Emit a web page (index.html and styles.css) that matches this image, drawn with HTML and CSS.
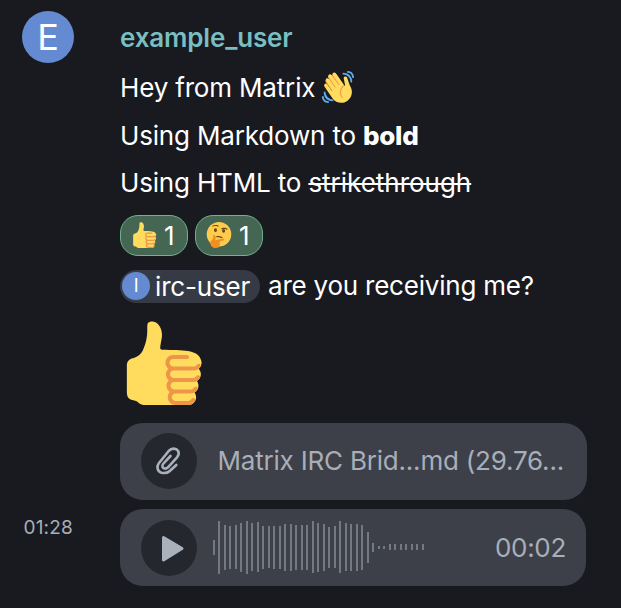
FILE: index.html
```html
<!DOCTYPE html>
<html lang="en">
<head>
<meta charset="utf-8">
<title>Chat</title>
<link rel="stylesheet" href="styles.css">
</head>
<body>
<svg class="defs" aria-hidden="true">
  <symbol id="thumb" viewBox="0 0 36 36">
    <path fill="#FFDB5E" d="M34.956 17.916c0-.503-.12-.975-.321-1.404-1.341-4.326-7.619-4.01-16.549-4.221-1.493-.035-.639-1.798-.115-5.668.341-2.517-1.282-6.382-4.01-6.382-4.498 0-.171 3.548-4.148 12.322-2.125 4.688-6.875 2.062-6.875 6.771v10.719c0 1.833.18 3.595 2.758 3.885C8.195 34.219 7.633 36 11.238 36h18.044c1.838 0 3.333-1.496 3.333-3.334 0-.762-.267-1.456-.698-2.018 1.02-.571 1.72-1.649 1.72-2.899 0-.76-.266-1.454-.696-2.015 1.023-.57 1.725-1.649 1.725-2.901 0-.909-.368-1.733-.961-2.336.757-.611 1.251-1.535 1.251-2.581z"/>
    <path fill="#EE9547" d="M23.02 21.249h8.604c1.17 0 2.268-.626 2.866-1.633.246-.415.109-.952-.307-1.199-.415-.247-.952-.108-1.199.307-.283.479-.806.775-1.361.775h-8.81c-.873 0-1.583-.71-1.583-1.583s.71-1.583 1.583-1.583H28.7c.483 0 .875-.392.875-.875s-.392-.875-.875-.875h-5.888c-1.838 0-3.333 1.495-3.333 3.333 0 1.025.475 1.932 1.205 2.544-.615.605-.998 1.445-.998 2.373 0 1.028.478 1.938 1.212 2.549-.611.604-.99 1.441-.99 2.367 0 1.12.559 2.108 1.409 2.713-.524.589-.852 1.356-.852 2.204 0 1.838 1.495 3.333 3.333 3.333h5.484c1.17 0 2.269-.625 2.867-1.632.247-.415.11-.952-.305-1.199-.416-.245-.953-.11-1.199.305-.285.479-.808.776-1.363.776h-5.484c-.873 0-1.583-.71-1.583-1.583s.71-1.583 1.583-1.583h6.506c1.17 0 2.27-.626 2.867-1.633.247-.416.11-.953-.305-1.199-.419-.251-.954-.11-1.199.305-.289.487-.799.777-1.363.777h-7.063c-.873 0-1.583-.711-1.583-1.584s.71-1.583 1.583-1.583h8.091c1.17 0 2.269-.625 2.867-1.632.247-.415.11-.952-.305-1.199-.417-.246-.953-.11-1.199.305-.289.486-.799.776-1.363.776H23.02c-.873 0-1.583-.71-1.583-1.583s.71-1.584 1.583-1.584z"/>
  </symbol>
</svg>
<main class="timeline">
  <div class="side"><div class="avatar">E</div></div>
  <div class="body">
    <div class="sender">example_user</div>
    <p class="line">Hey from Matrix <svg class="wave-emoji" viewBox="0 0 36 36"><path fill="#EF9645" d="M4.861 9.147c.94-.657 2.357-.531 3.201.166l-.968-1.407c-.779-1.111-.5-2.313.612-3.093 1.112-.777 4.263 1.312 4.263 1.312-.786-1.122-.639-2.544.483-3.331 1.122-.784 2.67-.513 3.456.611l10.292 14.72L25 31l-11.083-4.042L4.25 12.625c-.786-1.122-.519-2.692.611-3.478z"/><path fill="#FFDC5D" d="M2.695 17.336s-1.132-1.65.519-2.781c1.649-1.131 2.78.518 2.78.518l5.251 7.658c.181-.302.379-.6.6-.894L4.557 11.21s-1.131-1.649.519-2.78c1.649-1.131 2.78.518 2.78.518l6.855 9.997c.255-.208.516-.417.785-.622L7.549 6.732s-1.131-1.649.519-2.78c1.649-1.131 2.78.518 2.78.518l7.947 11.589c.292-.179.581-.334.871-.498L12.238 4.729s-1.131-1.649.518-2.78c1.649-1.131 2.78.518 2.78.518l7.854 11.454 1.194 1.742c-4.948 3.394-5.419 9.779-2.592 13.902.565.825 1.39.26 1.39.26-3.393-4.949-2.357-10.51 2.592-13.903L24.515 8.62s-.545-1.924 1.378-2.47c1.924-.545 2.47 1.379 2.47 1.379l1.685 5.004c.668 1.984 1.379 3.961 2.32 5.831 2.657 5.28 1.07 11.842-3.94 15.279-5.465 3.747-12.936 2.354-16.684-3.11L2.695 17.336z"/><g fill="#5DADEC"><path d="M12 32.042C8 32.042 3.958 28 3.958 24c0-.553-.405-1-.958-1s-1.042.447-1.042 1C1.958 30 6 34.042 12 34.042c.553 0 1-.489 1-1.042s-.447-.958-1-.958z"/><path d="M7 34c-3 0-5-2-5-5 0-.553-.447-1-1-1s-1 .447-1 1c0 4 3 7 7 7 .553 0 1-.447 1-1s-.447-1-1-1zM24 2c-.552 0-1 .448-1 1s.448 1 1 1c4 0 8 3.589 8 8 0 .552.448 1 1 1s1-.448 1-1c0-5.514-4-10-10-10z"/><path d="M29 .042c-.552 0-1 .406-1 .958s.448 1.042 1 1.042c3 0 4.958 2.225 4.958 4.958 0 .552.489 1 1.042 1s.958-.448.958-1C35.958 3.163 33 .042 29 .042z"/></g></svg></p>
    <p class="line markdown">Using Markdown to <strong>bold</strong></p>
    <p class="line">Using HTML to <del>strikethrough</del></p>
    <div class="reactions">
      <div class="reaction"><svg class="emoji"><use href="#thumb"/></svg><span>1</span></div>
      <div class="reaction"><svg class="emoji" viewBox="0 0 36 36"><circle fill="#FFCB4C" cx="18" cy="17.018" r="17"/><path fill="#65471B" d="M14.524 21.036c-.145-.116-.258-.274-.312-.464-.134-.46.13-.918.59-1.021 4.528-1.021 7.577 1.363 7.706 1.465.384.306.459.845.173 1.205-.286.358-.828.401-1.211.097-.11-.084-2.523-1.923-6.182-1.098-.274.061-.554-.016-.764-.184z"/><ellipse fill="#65471B" cx="13.119" cy="11.174" rx="2.125" ry="2.656"/><ellipse fill="#65471B" cx="24.375" cy="12.236" rx="2.125" ry="2.656"/><path fill="#F19020" d="M17.276 35.149s1.265-.411 1.429-1.352c.173-.972-.624-1.167-.624-1.167s1.041-.208 1.172-1.376c.123-1.101-.861-1.363-.861-1.363s.97-.4 1.016-1.539c.038-.959-.995-1.428-.995-1.428s5.038-1.221 5.556-1.341c.516-.12 1.32-.615 1.069-1.694-.249-1.08-1.204-1.118-1.697-1.003-.494.115-6.744 1.566-8.9 2.068l-1.439.334c-.54.127-.785-.11-.404-.512.508-.536.833-1.129.946-2.113.119-1.035-.232-2.313-.433-2.809-.374-.921-1.005-1.649-1.734-1.899-1.137-.39-1.945.321-1.542 1.561.604 1.854.208 3.375-.833 4.293-2.449 2.157-3.588 3.695-2.83 6.973.828 3.575 4.377 5.876 7.952 5.048l3.152-.681z"/><path fill="#65471B" d="M9.296 6.351c-.164-.088-.303-.224-.391-.399-.216-.428-.04-.927.393-1.112 4.266-1.831 7.699-.043 7.843.034.433.231.608.747.391 1.154-.216.405-.74.546-1.173.318-.123-.063-2.832-1.432-6.278.047-.257.109-.547.085-.785-.042zm12.135 3.75c-.156-.098-.286-.243-.362-.424-.187-.442.023-.927.468-1.084 4.381-1.536 7.685.48 7.823.567.415.26.555.787.312 1.178-.242.39-.776.495-1.191.238-.12-.072-2.727-1.621-6.267-.379-.266.091-.553.046-.783-.096z"/></svg><span>1</span></div>
    </div>
    <div class="mention-line"><span class="mention"><span class="mini-avatar">I</span>irc-user</span><span class="question">are you receiving me?</span></div>
    <svg class="big-emoji"><use href="#thumb"/></svg>
    <div class="card file">
      <div class="round"><svg class="clip" viewBox="0 0 36 40"><path d="M26.300 25 19.500 31.200C17.500 33 14.500 33.300 11.500 32.800C7.500 31.500 6.200 26.800 8.800 23.300L18.500 11.200C21.500 7.800 26 7.700 28.200 11C29.300 13.200 28.600 15.300 27 17.300L18 27.300C16 29.200 13 28.900 12.500 26.900C12 25.500 12.600 24.500 13.500 23.500L20.500 16" fill="none" stroke="#a9b2bc" stroke-width="2.600" stroke-linecap="round" stroke-linejoin="round"/></svg></div>
      <span class="filename">Matrix IRC Brid...md (29.76...</span>
    </div>
  </div>
  <div class="side time">01:28</div>
  <div class="card audio">
    <div class="round"><svg class="play" viewBox="0 0 56 56"><path d="M22.500 17.500 41 28.500 22.500 40Z" fill="#a9b2bc" stroke="#a9b2bc" stroke-width="3" stroke-linejoin="round"/></svg></div>
    <svg class="waveform" viewBox="0 0 213 56" shape-rendering="crispEdges"><path d="M1 20v15M6 1v53M12 5v45M17 6v43M23 5v44M28 3v49M34 1v53M39 3v48M45 2v50M50 6v43M56 6v42M61 6v43M67 6v43M72 4v47M78 4v47M83 5v45M89 5v45M94 5v45M100 1v52M105 3v49M111 4v47M116 7v41M122 6v42M127 1v52M133 3v48M138 4v47M144 4v47M149 5v45M155 12v31M160 23v9M166 26v3M171 26v3M177 24v6M182 24v6M188 24v6M193 24v6M199 24v6M204 24v6M210 24v6" stroke="#737882" stroke-width="2"/></svg>
    <span class="duration">00:02</span>
  </div>
</main>
</body>
</html>
```
FILE: styles.css
```css
* { box-sizing: border-box; }
body {
  margin: 0;
  height: 608px;
  overflow: hidden;
  background: #191a1f;
  color: #fff;
  font: 26px/47.33px Inter, sans-serif;
  letter-spacing: -0.17px;
}
svg { display: block; flex: none; }
.defs { display: none; }
.timeline {
  display: grid;
  grid-template-columns: 120px 467px;
  row-gap: 9px;
}
.side { padding: 11px 0 0 22px; }
.avatar {
  width: 52px;
  height: 52px;
  border-radius: 50%;
  background: #648bd2;
  font-size: 36px;
  line-height: 52px;
  text-align: center;
}
.body { padding-top: 14px; }
.sender { height: 50px; font-weight: 600; color: #78bec2; line-height: 48px; }
.line { margin: 0; height: 47.33px; white-space: nowrap; }
.markdown { line-height: 49px; }
.line strong { font-weight: 800; letter-spacing: -0.3px; }
.line del { text-decoration-thickness: 2px; letter-spacing: -0.02px; }
.wave-emoji { display: inline-block; width: 32px; height: 32px; vertical-align: -6px; }
.reactions { display: flex; gap: 7px; margin-top: 9px; }
.reaction {
  display: flex;
  align-items: center;
  gap: 7px;
  width: 68px;
  height: 41px;
  padding-left: 10px;
  border: 1px solid #71b28d;
  border-radius: 18px;
  background: #446653;
  line-height: 39px;
}
.emoji { width: 26px; height: 26px; }
.mention-line { display: flex; gap: 8px; margin-top: 14px; line-height: 33px; white-space: nowrap; }
.mention {
  display: flex;
  align-items: center;
  gap: 5px;
  width: 140px;
  height: 33px;
  padding-left: 2px;
  border-radius: 17px;
  background: #363a44;
}
.question { line-height: 32px; letter-spacing: -0.22px; }
.mini-avatar {
  width: 28px;
  height: 28px;
  border-radius: 50%;
  background: #648bd2;
  font-size: 18px;
  line-height: 28px;
  text-align: center;
}
.big-emoji { width: 84px; height: 84px; margin: 18px 0 0 -0.500px; }
.card {
  display: flex;
  align-items: center;
  height: 77px;
  padding-left: 21px;
  border-radius: 23px;
  background: #3d4048;
  color: #a9aeb9;
}
.file { margin-top: 18px; }
.audio { width: 466px; padding-right: 20px; }
.round { flex: none; width: 56px; height: 56px; border-radius: 50%; background: #24272e; }
.audio .round { margin-top: 1px; }
.clip { width: 36px; height: 40px; margin: 7px 0 0 9px; }
.play { width: 56px; height: 56px; }
.filename { margin: -1px 0 0 20.500px; letter-spacing: -0.2px; white-space: nowrap; }
.waveform { width: 213px; height: 56px; margin: 1px 0 0 16px; }
.duration { margin-left: auto; letter-spacing: -0.3px; }
.time { padding: 9px 0 0 23.500px; font-size: 19px; line-height: 20px; letter-spacing: 0.2px; color: #a9aeb9; }
```
